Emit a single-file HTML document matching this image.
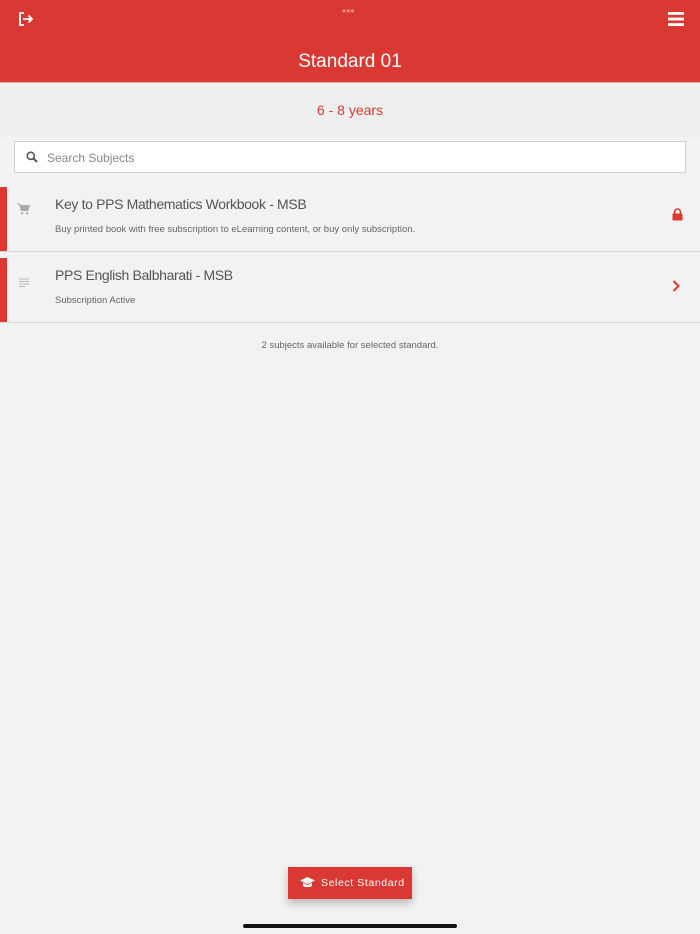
<!DOCTYPE html>
<html><head><meta charset="utf-8"><style>
*{margin:0;padding:0;box-sizing:border-box}
body{width:700px;height:934px;background:#f2f2f2;font-family:"Liberation Sans",sans-serif;position:relative;overflow:hidden}
.hdr{position:absolute;left:0;top:0;width:700px;height:82px;background:#da3832}
.dots{position:absolute;left:342px;top:4px;color:#f08a85;font-size:12px;letter-spacing:0px}
.title{position:absolute;top:51px;width:700px;text-align:center;color:#fff;font-size:19px}
.band{position:absolute;top:82px;left:0;width:700px;height:55px;background:#efefef;border-top:1px solid #e8aaa6}
.age{position:absolute;top:102px;width:700px;text-align:center;color:#da3832;font-size:14px}
.search{position:absolute;left:14px;top:141px;width:672px;height:32px;background:#fff;border:1px solid #d0d0d0}
.search span{position:absolute;left:32px;top:9px;font-size:12px;color:#888}
.row{position:absolute;left:0;width:700px;height:65px;border-bottom:1px solid #d6d6d6}
.row .bar{position:absolute;left:0;top:0;width:7px;height:64px;background:#da3832}
.row .t{position:absolute;left:55px;top:9px;font-size:14px;color:#555;letter-spacing:-0.35px}
.row .s{position:absolute;left:55px;top:37px;font-size:9.5px;color:#666}
.foot{position:absolute;top:340px;width:700px;text-align:center;font-size:9.5px;color:#666}
.btn{position:absolute;left:288px;top:867px;width:124px;height:32px;background:#da3832;color:#fff;font-size:10.5px;letter-spacing:.6px;box-shadow:0 4px 8px rgba(0,0,0,.25)}
.btn span{position:absolute;left:33px;top:10px}
.home{position:absolute;left:243px;top:924px;width:214px;height:4px;border-radius:2px;background:#111}
</style></head><body>
<div class="hdr">
<svg style="position:absolute;left:18px;top:12px" width="16" height="14" viewBox="0 0 16 14"><path d="M6 1H2v12h4" fill="none" stroke="#fff" stroke-width="1.8"/><path d="M5 7h9M10.5 3.5L14 7l-3.5 3.5" fill="none" stroke="#fff" stroke-width="1.8"/></svg>
<div class="dots">•••</div>
<svg style="position:absolute;left:668px;top:12px" width="16" height="14" viewBox="0 0 16 14"><rect y="0" width="16" height="2.8" fill="#fff"/><rect y="5.6" width="16" height="2.8" fill="#fff"/><rect y="11.2" width="16" height="2.8" fill="#fff"/></svg>
<div class="title">Standard 01</div>
</div>
<div class="band"></div>
<div class="age">6 - 8 years</div>
<div class="search"><svg style="position:absolute;left:11px;top:9px" width="12" height="12" viewBox="0 0 12 12"><circle cx="4.8" cy="4.8" r="3.6" fill="none" stroke="#555" stroke-width="1.6"/><path d="M7.5 7.5l3.5 3.5" stroke="#555" stroke-width="2"/></svg><span>Search Subjects</span></div>
<div class="row" style="top:187px"><div class="bar"></div>
<svg style="position:absolute;left:17px;top:16px" width="13" height="12" viewBox="0 0 13 12"><path d="M0 1h2.5l1.8 6.5h6.5L12.5 2.5H3.2" fill="#aaa" stroke="#aaa" stroke-width="1"/><circle cx="5" cy="10.3" r="1.2" fill="#aaa"/><circle cx="10" cy="10.3" r="1.2" fill="#aaa"/></svg>
<div class="t">Key to PPS Mathematics Workbook - MSB</div>
<div class="s">Buy printed book with free subscription to eLearning content, or buy only subscription.</div>
<svg style="position:absolute;left:672px;top:21px" width="11" height="13" viewBox="0 0 11 13"><path d="M2.5 6V4a3 3 0 0 1 6 0v2" fill="none" stroke="#da3832" stroke-width="1.6"/><rect x="0.5" y="5.5" width="10" height="7" rx="1" fill="#da3832"/></svg>
</div>
<div class="row" style="top:258px"><div class="bar"></div>
<svg style="position:absolute;left:19px;top:20px" width="10" height="9" viewBox="0 0 10 9"><path d="M0 1h10M0 3.5h10M0 6h10M0 8.5h6" stroke="#bbb" stroke-width="1"/></svg>
<div class="t">PPS English Balbharati - MSB</div>
<div class="s">Subscription Active</div>
<svg style="position:absolute;left:672px;top:22px" width="8" height="12" viewBox="0 0 8 12"><path d="M1.5 1l5 5-5 5" fill="none" stroke="#da3832" stroke-width="2"/></svg>
</div>
<div class="foot">2 subjects available for selected standard.</div>
<div class="btn"><svg style="position:absolute;left:12px;top:10px" width="15" height="12" viewBox="0 0 15 12"><path d="M7.5 0L15 3.5 7.5 7 0 3.5z" fill="#fff"/><path d="M3 5.5v3.5c1.5 1.5 7.5 1.5 9 0V5.5L7.5 8z" fill="#fff"/></svg><span>Select Standard</span></div>
<div class="home"></div>
</body></html>
